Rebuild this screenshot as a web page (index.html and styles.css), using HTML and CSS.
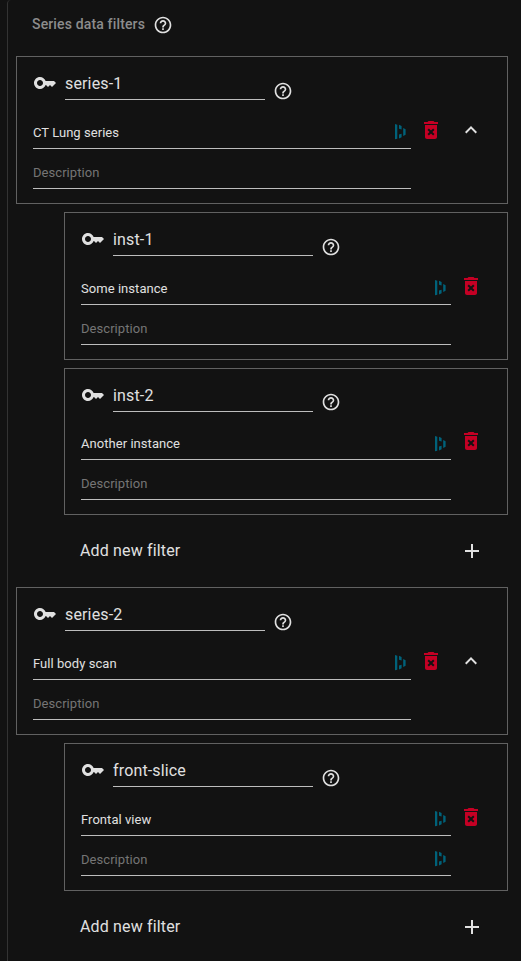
FILE: index.html
```
<!DOCTYPE html>
<html lang="en">
<head>
<meta charset="utf-8">
<title>Series data filters</title>
<link rel="stylesheet" href="styles.css">
</head>
<body>
<svg class="defs" aria-hidden="true">
  <symbol id="help" viewBox="0 0 24 24"><path d="M11 18h2v-2h-2v2zm1-16C6.480 2 2 6.480 2 12s4.480 10 10 10 10-4.480 10-10S17.520 2 12 2zm0 18c-4.410 0-8-3.590-8-8s3.590-8 8-8 8 3.590 8 8-3.590 8-8 8zm0-14c-2.210 0-4 1.790-4 4h2c0-1.100.900-2 2-2s2 .900 2 2c0 2-3 1.750-3 5h2c0-2.250 3-2.500 3-5 0-2.210-1.790-4-4-4z"/></symbol>
  <symbol id="key" viewBox="0 0 24 24"><path d="M21 10h-8.350C11.830 7.670 9.610 6 7 6c-3.310 0-6 2.690-6 6s2.690 6 6 6c2.610 0 4.830-1.670 5.650-4H13l2 2 2-2 2 2 4-4.040L21 10zM7 15c-1.650 0-3-1.350-3-3s1.350-3 3-3 3 1.350 3 3-1.350 3-3 3z"/></symbol>
  <symbol id="trash" viewBox="0 0 24 24"><path d="M6 19c0 1.100.900 2 2 2h8c1.100 0 2-.900 2-2V7H6v12zm2.460-7.120l1.410-1.410L12 12.590l2.120-2.120 1.410 1.410L13.410 14l2.120 2.120-1.410 1.410L12 15.410l-2.120 2.120-1.410-1.410L10.590 14l-2.130-2.120zM15.500 4l-1-1h-5l-1 1H5v2h14V4z"/></symbol>
  <symbol id="less" viewBox="0 0 24 24"><path d="M12 8l-6 6 1.410 1.410L12 10.830l4.590 4.580L18 14z"/></symbol>
  <symbol id="plus" viewBox="0 0 24 24"><path d="M19 13h-6v6h-2v-6H5v-2h6V5h2v6h6v2z"/></symbol>
  <symbol id="bars" viewBox="0 0 12 16"><path d="M0 0l2.300 .8v13.900L0 15.300zM4 .8l2.600 1.200V5.600L4 4.800zM4 10.600l2.600-.9V13.300L4 14.600zM8.200 4l2.400 1.200v5.600L8.200 12z"/></symbol>
</svg>
<main class="panel">
  <header class="heading"><h2>Series data filters</h2><svg class="help"><use href="#help"/></svg></header>

  <section class="card">
    <div class="name"><svg class="icon"><use href="#key"/></svg><span class="name-input">series-1</span><svg class="help"><use href="#help"/></svg></div>
    <div class="row">
      <div class="field"><span>CT Lung series</span><svg class="bars"><use href="#bars"/></svg></div>
      <svg class="icon trash"><use href="#trash"/></svg><svg class="icon"><use href="#less"/></svg>
    </div>
    <div class="row"><div class="field empty"><span>Description</span></div></div>
  </section>
  <div class="children">
    <section class="card">
      <div class="name"><svg class="icon"><use href="#key"/></svg><span class="name-input">inst-1</span><svg class="help"><use href="#help"/></svg></div>
      <div class="row"><div class="field"><span>Some instance</span><svg class="bars"><use href="#bars"/></svg></div><svg class="icon trash"><use href="#trash"/></svg></div>
      <div class="row"><div class="field empty"><span>Description</span></div></div>
    </section>
    <section class="card">
      <div class="name"><svg class="icon"><use href="#key"/></svg><span class="name-input">inst-2</span><svg class="help"><use href="#help"/></svg></div>
      <div class="row"><div class="field"><span>Another instance</span><svg class="bars"><use href="#bars"/></svg></div><svg class="icon trash"><use href="#trash"/></svg></div>
      <div class="row"><div class="field empty"><span>Description</span></div></div>
    </section>
    <div class="add"><span>Add new filter</span><svg class="icon"><use href="#plus"/></svg></div>
  </div>

  <section class="card">
    <div class="name"><svg class="icon"><use href="#key"/></svg><span class="name-input">series-2</span><svg class="help"><use href="#help"/></svg></div>
    <div class="row">
      <div class="field"><span>Full body scan</span><svg class="bars"><use href="#bars"/></svg></div>
      <svg class="icon trash"><use href="#trash"/></svg><svg class="icon"><use href="#less"/></svg>
    </div>
    <div class="row"><div class="field empty"><span>Description</span></div></div>
  </section>
  <div class="children">
    <section class="card">
      <div class="name"><svg class="icon"><use href="#key"/></svg><span class="name-input">front-slice</span><svg class="help"><use href="#help"/></svg></div>
      <div class="row"><div class="field"><span>Frontal view</span><svg class="bars"><use href="#bars"/></svg></div><svg class="icon trash"><use href="#trash"/></svg></div>
      <div class="row"><div class="field empty"><span>Description</span><svg class="bars"><use href="#bars"/></svg></div></div>
    </section>
    <div class="add"><span>Add new filter</span><svg class="icon"><use href="#plus"/></svg></div>
  </div>
</main>
</body>
</html>
```
FILE: styles.css
```
* { box-sizing: border-box; }
body { margin: 0; background: #121212; color: #e0e0e0; font: 16px/24px Roboto, sans-serif; letter-spacing: .15px; overflow: hidden; }
svg { display: block; flex: none; fill: currentColor; }
.defs { display: none; }
.panel { height: 961px; margin-left: 7px; padding: 0 13px 0 8px; border-left: 1px solid #333; border-top-left-radius: 4px; overflow: hidden; }
.heading { display: flex; align-items: center; gap: 8px; height: 48.4px; padding-left: 16px; }
.heading h2 { margin: 0; font-size: 14px; font-weight: 500; letter-spacing: .15px; color: #8c8c8c; }
.heading .help { margin-top: 2px; }
.help { width: 20px; height: 20px; }
.icon { width: 24px; height: 24px; }
.card { height: 147.6px; margin-top: 8px; padding: 0 16px; border: 1px solid #616161; }
.name { display: flex; height: 43px; align-items: flex-end; }
.name .icon { margin-bottom: 5px; }
.name-input { width: 200px; height: 33px; margin-left: 8px; border-bottom: 1px solid #bdbdbd; line-height: 34px; }
.name .help { margin: 0 0 -.8px 8px; }
.row { display: flex; height: 40px; align-items: flex-end; padding-right: 8px; }
.name + .row { height: 48.8px; }
.field { flex: 1; display: flex; justify-content: space-between; align-items: center; height: 33px; border-bottom: 1px solid #bdbdbd; font-size: 13px; letter-spacing: .05px; }
.field span { padding-top: 2px; }
.empty { color: #757575; }
.bars { width: 12px; height: 16px; margin: .6px 4px 0 0; color: #00627a; }
.row .icon { margin: 0 0 7px 8px; }
.row .trash { color: #c40024; }
.trash + .icon { margin-left: 16px; }
.row:last-child .field { flex: none; width: 370px; }
.panel > .card .row:last-child .field { width: 378px; }
.children { padding-left: 48px; }
.add { display: flex; justify-content: space-between; align-items: center; height: 64.2px; padding: 8px 24px 0 16px; }
```
